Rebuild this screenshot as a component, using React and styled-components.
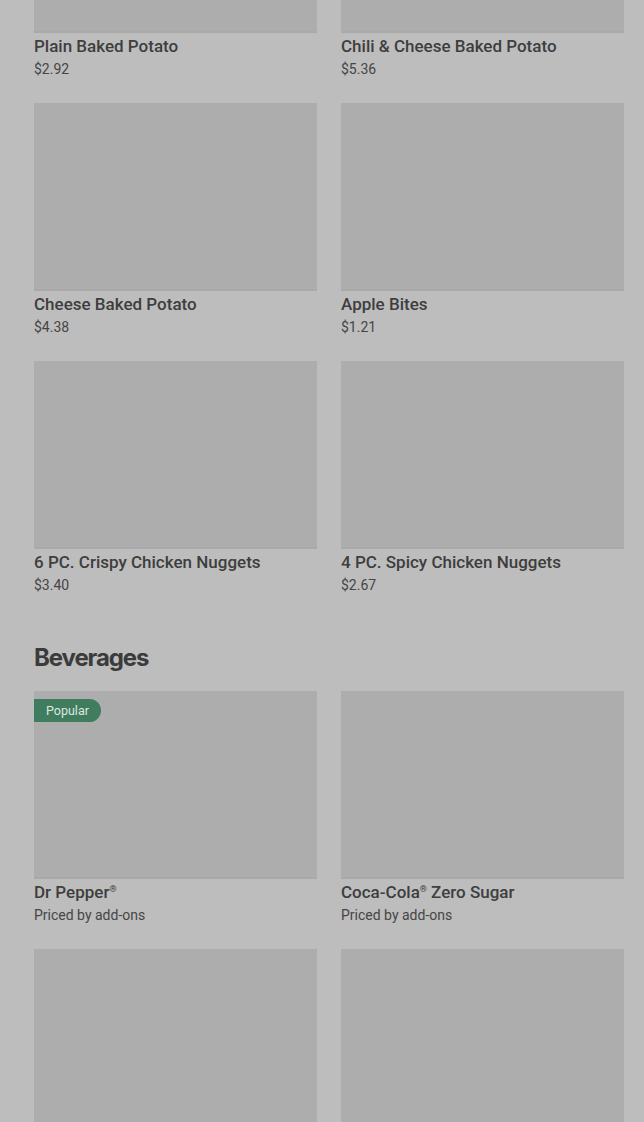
import React from 'react';
import styled, { createGlobalStyle } from 'styled-components';

const GlobalStyle = createGlobalStyle`
  html, body {
    margin: 0;
    padding: 0;
    background: #bdbdbd;
    overflow: hidden;
  }
  body {
    font-family: Roboto, 'Noto Sans', Arial, sans-serif;
  }
`;

const Page = styled.div`
  padding: 0 20px 0 34px;
  margin-top: -155px;
  height: 1277px;
  overflow: hidden;
`;

const Section = styled.section`
  & + & {
    margin-top: 47px;
  }
`;

const SectionTitle = styled.h2`
  margin: 0 0 17px;
  font-family: Inter, 'Noto Sans', sans-serif;
  font-size: 24px;
  line-height: 32px;
  font-weight: 700;
  letter-spacing: -1.1px;
  color: #3b3b3b;
`;

const Grid = styled.div`
  display: grid;
  grid-template-columns: 1fr 1fr;
  column-gap: 24px;
  row-gap: 24px;
`;

const Card = styled.div`
  display: flex;
  flex-direction: column;
`;

const Thumb = styled.div`
  position: relative;
  height: 188px;
  background: #adadad;
  box-shadow: inset 0 -2px 0 #a9a9a9;
`;

const Badge = styled.span`
  position: absolute;
  top: 8px;
  left: 0;
  height: 23px;
  padding: 0 12px;
  display: flex;
  align-items: center;
  background: #3f7d5e;
  color: #dfe6e2;
  font-size: 12.5px;
  border-radius: 0 12px 12px 0;
`;

const Name = styled.div`
  margin-top: 2px;
  font-size: 17px;
  line-height: 22px;
  font-weight: 500;
  color: #3e3e3e;
`;

const Reg = styled.span`
  font-size: 9px;
  vertical-align: 6px;
  line-height: 0;
`;

const Price = styled.div`
  margin-top: 2px;
  font-size: 14px;
  line-height: 20px;
  color: #454545;
`;

const sides = [
  { name: 'Plain Baked Potato', price: '$2.92' },
  { name: 'Chili & Cheese Baked Potato', price: '$5.36' },
  { name: 'Cheese Baked Potato', price: '$4.38' },
  { name: 'Apple Bites', price: '$1.21' },
  { name: '6 PC. Crispy Chicken Nuggets', price: '$3.40' },
  { name: '4 PC. Spicy Chicken Nuggets', price: '$2.67' },
];

// the last row is only visible down to its pictures
const beverages = [
  { id: 'drpepper', name: ['Dr Pepper', ''], price: 'Priced by add-ons', popular: true },
  { id: 'cokezero', name: ['Coca-Cola', ' Zero Sugar'], price: 'Priced by add-ons' },
  { id: 'sprite' },
  { id: 'coke' },
];

const renderName = (name) =>
  Array.isArray(name) ? (
    <>
      {name[0]}
      <Reg>®</Reg>
      {name[1]}
    </>
  ) : (
    name
  );

const Item = ({ item }) => (
  <Card>
    <Thumb>{item.popular && <Badge>Popular</Badge>}</Thumb>
    {item.name && <Name>{renderName(item.name)}</Name>}
    {item.price && <Price>{item.price}</Price>}
  </Card>
);

const App = () => (
  <>
    <GlobalStyle />
    <Page>
      <Section>
        <Grid>
          {sides.map((item) => (
            <Item item={item} key={item.name} />
          ))}
        </Grid>
      </Section>
      <Section>
        <SectionTitle>Beverages</SectionTitle>
        <Grid>
          {beverages.map((item) => (
            <Item item={item} key={item.id} />
          ))}
        </Grid>
      </Section>
    </Page>
  </>
);

export default App;
